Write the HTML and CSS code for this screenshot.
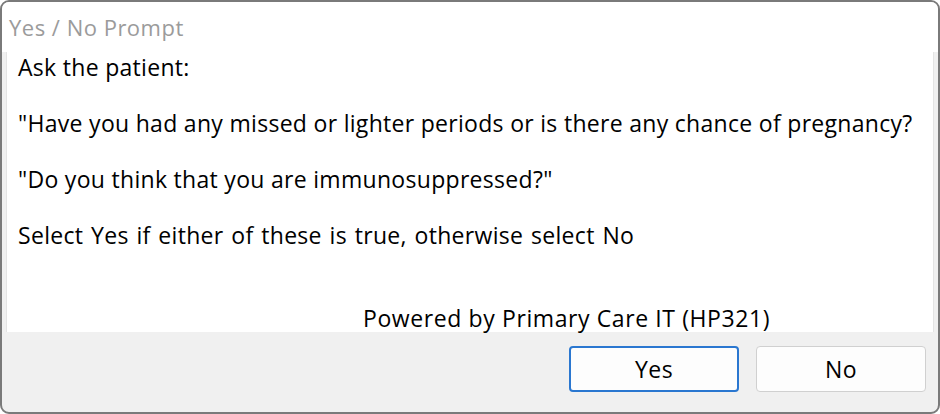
FILE: index.html
```html
<!DOCTYPE html>
<html lang="en">
<head>
<meta charset="utf-8">
<title>Yes / No Prompt</title>
<link rel="stylesheet" href="styles.css">
</head>
<body>
<div class="window">
  <div class="titlebar"><span class="title">Yes / No Prompt</span></div>
  <div class="client">
    <div class="panel">
      <p class="line">Ask the patient:</p>
      <p class="line">"Have you had any missed or lighter periods or is there any chance of pregnancy?</p>
      <p class="line">"Do you think that you are immunosuppressed?"</p>
      <p class="line line-wide">Select Yes if either of these is true, otherwise select No</p>
      <p class="powered">Powered by Primary Care IT (HP321)</p>
    </div>
    <div class="footer">
      <button class="btn btn-default" type="button">Yes</button>
      <button class="btn" type="button">No</button>
    </div>
  </div>
</div>
</body>
</html>
```

FILE: styles.css
```css
html, body {
  margin: 0;
  padding: 0;
  background: #ffffff;
}
body {
  width: 940px;
  height: 414px;
  overflow: hidden;
  font-family: "Open Sans", "Noto Sans", sans-serif;
}
.window {
  box-sizing: border-box;
  width: 940px;
  height: 414px;
  border: 2px solid #7a7a7a;
  border-radius: 9px;
  overflow: hidden;
  background: #f0f0f0;
  display: flex;
  flex-direction: column;
}
.titlebar {
  height: 50px;
  background: #ffffff;
  display: flex;
  align-items: center;
  padding-left: 7px;
}
.title {
  font-size: 22px;
  letter-spacing: 0.5px;
  color: #9b9b9b;
}
.client {
  flex: 1;
  display: flex;
  flex-direction: column;
  padding: 0 4px 0 4px;
}
.panel {
  height: 280px;
  background: #ffffff;
  border-left: 1px solid #e4e4e4;
  border-right: 1px solid #e4e4e4;
  display: flex;
  flex-direction: column;
  padding-left: 11px;
  color: #000000;
}
.line {
  margin: 0 0 26px 0;
  font-size: 23px;
  letter-spacing: 0.3px;
  line-height: 30px;
  white-space: nowrap;
}
.line-wide {
  word-spacing: 1.5px;
}
.powered {
  margin: auto 0 0 345px;
  font-size: 23px;
  letter-spacing: 0.6px;
  line-height: 28px;
  white-space: nowrap;
}
.footer {
  flex: 1;
  display: flex;
  justify-content: flex-end;
  align-items: flex-start;
  gap: 17px;
  padding: 14px 8px 0 0;
}
.btn {
  box-sizing: border-box;
  width: 170px;
  height: 46px;
  background: #fdfdfd;
  border: 1px solid #d0d0d0;
  border-radius: 4px;
  font-family: "Open Sans", "Noto Sans", sans-serif;
  font-size: 23px;
  letter-spacing: 0.5px;
  color: #000000;
  padding: 0;
}
.btn-default {
  border: 2px solid #2a77d0;
}
```
